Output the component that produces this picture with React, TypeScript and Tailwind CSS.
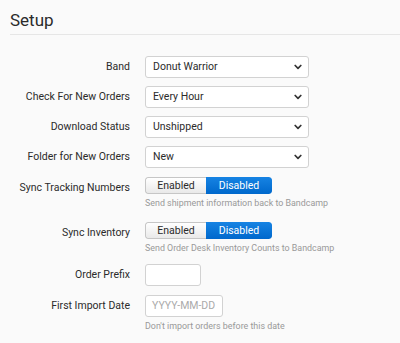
import React from "react";

function Chevron() {
  return (
    <svg width="8" height="6" viewBox="0 0 8 6" className="shrink-0">
      <path d="M1.2 1.5 L4 4.3 L6.8 1.5" fill="none" stroke="#333" strokeWidth="1.7" strokeLinecap="round" strokeLinejoin="round" />
    </svg>
  );
}

function Select({ value }: { value: string }) {
  return (
    <div className="w-[164px] h-[22px] flex items-center justify-between pl-[7px] pr-[6px] bg-white border border-[#d2d2d2] rounded-[3px] text-[10.5px] text-[#2b2b2b]">
      <span>{value}</span>
      <Chevron />
    </div>
  );
}

function Toggle() {
  return (
    <div className="flex h-[17px] w-[127px] text-[10.5px] rounded-[3px] overflow-hidden">
      <div className="w-[61px] flex items-center justify-center border border-r-0 border-[#c6c6c6] rounded-l-[3px] bg-gradient-to-b from-white to-[#e9e9e9] text-[#2b2b2b]">
        Enabled
      </div>
      <div className="flex-1 flex items-center justify-center bg-gradient-to-b from-[#1683e3] to-[#0068cc] text-white rounded-r-[3px]">
        Disabled
      </div>
    </div>
  );
}

function Row({
  label,
  children,
  help,
  mb,
}: {
  label: string;
  children: React.ReactNode;
  help?: string;
  mb: string;
}) {
  return (
    <div className={`flex items-start ${mb}`}>
      <div className="w-[120px] h-[22px] leading-[22px] text-right text-[10.5px] text-[#2b2b2b] shrink-0">{label}</div>
      <div className="ml-[15px] flex flex-col">
        {children}
        {help && <div className="mt-[4px] text-[8.9px] leading-[11px] text-[#999]">{help}</div>}
      </div>
    </div>
  );
}

export default function App() {
  return (
    <div className="w-[400px] h-[343px] bg-[#fafafa] overflow-hidden" style={{ fontFamily: "Roboto, 'Liberation Sans', sans-serif" }}>
      <div className="pl-[10px] pt-[9px]">
        <div className="text-[17px] leading-[22px] text-[#2b2b2b]">Setup</div>
        <div className="mt-[3px] h-px bg-[#e6e6e6]" />
      </div>
      <div className="pl-[10px] pt-[21px]">
        <Row label="Band" mb="mb-[8px]">
          <Select value="Donut Warrior" />
        </Row>
        <Row label="Check For New Orders" mb="mb-[8px]">
          <Select value="Every Hour" />
        </Row>
        <Row label="Download Status" mb="mb-[8px]">
          <Select value="Unshipped" />
        </Row>
        <Row label="Folder for New Orders" mb="mb-[9px]">
          <Select value="New" />
        </Row>
        <Row label="Sync Tracking Numbers" help="Send shipment information back to Bandcamp" mb="mb-[13px]">
          <Toggle />
        </Row>
        <Row label="Sync Inventory" help="Send Order Desk Inventory Counts to Bandcamp" mb="mb-[10px]">
          <Toggle />
        </Row>
        <Row label="Order Prefix" mb="mb-[9px]">
          <div className="w-[56px] h-[22px] bg-white border border-[#d2d2d2] rounded-[3px]" />
        </Row>
        <Row label="First Import Date" help="Don't import orders before this date" mb="mb-0">
          <div className="w-[78px] h-[22px] flex items-center pl-[6px] bg-white border border-[#d2d2d2] rounded-[3px] text-[10.5px] text-[#aaa]">
            YYYY-MM-DD
          </div>
        </Row>
      </div>
    </div>
  );
}
